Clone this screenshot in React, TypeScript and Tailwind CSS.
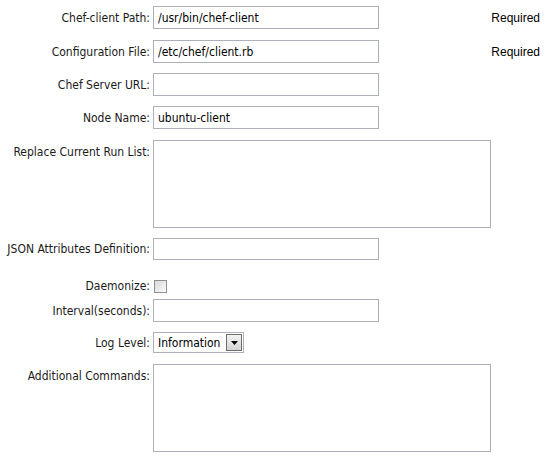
import React from 'react';

const labelCls = 'w-[153px] shrink-0 pr-[3px] text-right text-[12px] leading-[14px] text-[#1a1a1a]';
const fieldCls =
  'h-[23px] w-[226px] border border-[#abb0bc] bg-white px-[4px] text-[12px] text-black outline-none';
const reqFont = { fontFamily: '"Liberation Sans", Arial, sans-serif' };

function Row({ label, children, alignTop = false, mt }: { label: string; children: React.ReactNode; alignTop?: boolean; mt: string }) {
  return (
    <div className={`flex ${alignTop ? 'items-start' : 'items-center'} ${mt}`}>
      <div className={`${labelCls} ${alignTop ? 'pt-[5px]' : ''}`}>{label}</div>
      {children}
    </div>
  );
}

export default function App() {
  return (
    <div
      className="relative h-[459px] w-[546px] bg-white pt-[6px]"
      style={{ fontFamily: '"DejaVu Sans Condensed", "DejaVu Sans", sans-serif' }}
    >
      <div className="flex items-center">
        <div className={labelCls}>Chef-client Path:</div>
        <input className={fieldCls} defaultValue="/usr/bin/chef-client" />
        <span className="ml-auto mr-[6px] text-[12px] text-black" style={reqFont}>Required</span>
      </div>
      <div className="mt-[11px] flex items-center">
        <div className={labelCls}>Configuration File:</div>
        <input className={fieldCls} defaultValue="/etc/chef/client.rb" />
        <span className="ml-auto mr-[6px] text-[12px] text-black" style={reqFont}>Required</span>
      </div>
      <Row label="Chef Server URL:" mt="mt-[10px]">
        <input className={fieldCls} defaultValue="" />
      </Row>
      <Row label="Node Name:" mt="mt-[10px]">
        <input className={fieldCls} defaultValue="ubuntu-client" />
      </Row>
      <Row label="Replace Current Run List:" mt="mt-[11px]" alignTop>
        <textarea className="h-[88px] w-[338px] resize-none border border-[#abb0bc] bg-white outline-none" />
      </Row>
      <Row label="JSON Attributes Definition:" mt="mt-[10px]">
        <input className="h-[22px] w-[226px] border border-[#abb0bc] bg-white outline-none" />
      </Row>
      <Row label="Daemonize:" mt="mt-[19px]">
        <div className="ml-[1px] h-[13px] w-[13px] border border-[#8f9090] bg-gradient-to-br from-[#d8d8d8] to-[#fbfbfb]" />
      </Row>
      <Row label="Interval(seconds):" mt="mt-[6px]">
        <input className={fieldCls} />
      </Row>
      <Row label="Log Level:" mt="mt-[10px]">
        <div className="flex h-[21px] w-[91px] items-center border border-[#abb0bc] bg-white pl-[4px] text-[12px] text-black">
          <span className="flex-1">Information</span>
          <div className="mr-[1px] flex h-[17px] w-[16px] items-center justify-center border border-[#6d6d6d] bg-gradient-to-b from-[#f4f4f4] to-[#d4d4d4]">
            <svg width="7" height="4" viewBox="0 0 7 4">
              <path d="M0 0h7L3.5 4z" fill="#000" />
            </svg>
          </div>
        </div>
      </Row>
      <Row label="Additional Commands:" mt="mt-[11px]" alignTop>
        <textarea className="h-[88px] w-[338px] resize-none border border-[#abb0bc] bg-white outline-none" />
      </Row>
    </div>
  );
}
